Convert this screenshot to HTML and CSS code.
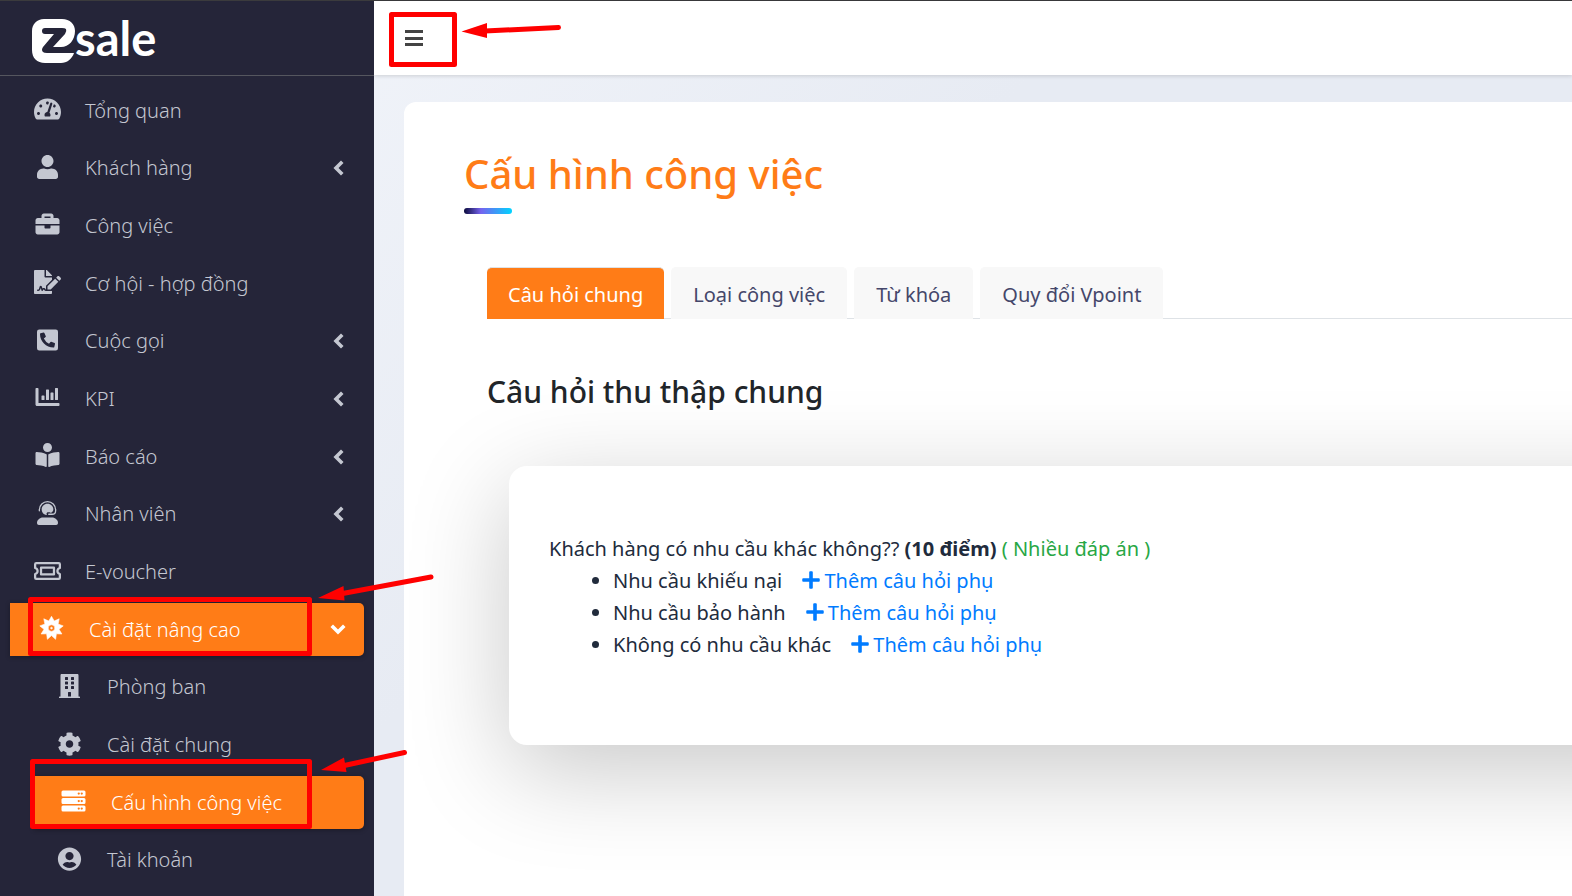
FILE: index.html
```html
<!DOCTYPE html>
<html lang="vi">
<head>
<meta charset="utf-8">
<meta name="viewport" content="width=device-width, initial-scale=1">
<title>zsale - Cấu hình công việc</title>
<link rel="stylesheet" href="styles.css">
</head>
<body>
<svg class="sprite" aria-hidden="true">
  <symbol id="chevron-left" viewBox="0 0 14 16"><path d="M10 3 5 8l5 5" fill="none" stroke="currentColor" stroke-width="3.6" stroke-linecap="square"/></symbol>
  <symbol id="plus" viewBox="0 0 448 512"><path d="M424 210H270V56c0-17-8-24-24-24h-44c-16 0-24 7-24 24v154H24c-17 0-24 8-24 24v44c0 16 7 24 24 24h154v154c0 17 8 24 24 24h44c16 0 24-7 24-24V302h154c17 0 24-8 24-24v-44c0-16-7-24-24-24z"/></symbol>
</svg>

<div class="app">
  <aside class="sidebar">
    <a class="brand" href="#" aria-label="zsale">
      <svg class="brand-mark" viewBox="0 0 44 44" aria-hidden="true">
        <path fill="#fff" d="M12 0H30C38 0 43 5 43 12C43 21 37 28 29 28H21L33 15Q35 12 34 10Q33 9 30 9H13Q10 9 10 12T13 15H22L11 28Q9 31 11 33Q12 34 15 34H42C40 40 35 44 29 44H13C5 44 0 39 0 31V12C0 5 5 0 12 0Z"/>
      </svg>
      <span class="brand-name">sale</span>
    </a>
    <nav class="nav" aria-label="Menu">
      <ul class="menu">
        <li><a class="item" href="#">
          <svg class="icon" viewBox="0 0 576 512"><path d="M288 32C128.94 32 0 160.94 0 320c0 52.8 14.25 102.26 39.06 144.8 5.61 9.62 16.3 15.2 27.44 15.2h443c11.14 0 21.83-5.58 27.44-15.2C561.75 422.26 576 372.8 576 320c0-159.06-128.94-288-288-288zm0 64c14.71 0 26.58 10.13 30.32 23.65-1.11 2.26-2.64 4.23-3.45 6.67l-9.22 27.67c-5.13 3.49-10.97 6.01-17.64 6.01-17.67 0-32-14.33-32-32S270.33 96 288 96zM96 384c-17.67 0-32-14.33-32-32s14.33-32 32-32 32 14.33 32 32-14.33 32-32 32zm48-160c-17.67 0-32-14.33-32-32s14.33-32 32-32 32 14.33 32 32-14.33 32-32 32zm246.77-72.41l-61.33 184C343.13 347.33 352 364.54 352 384c0 11.72-3.38 22.55-8.88 32H232.88c-5.5-9.45-8.88-20.28-8.88-32 0-33.94 26.5-61.43 59.9-63.59l61.34-184.01c4.17-12.56 17.73-19.45 30.36-15.17 12.57 4.19 19.35 17.79 15.17 30.36zm14.66 57.2l15.52-46.55c3.47-1.29 7.13-2.23 11.05-2.23 17.67 0 32 14.33 32 32s-14.33 32-32 32c-11.38-.01-20.89-6.28-26.57-15.22zM480 384c-17.67 0-32-14.33-32-32s14.33-32 32-32 32 14.33 32 32-14.33 32-32 32z"/></svg>
          <span class="label">Tổng quan</span></a></li>
        <li><a class="item" href="#">
          <svg class="icon" viewBox="0 0 448 512"><path d="M224 256c70.7 0 128-57.3 128-128S294.7 0 224 0 96 57.3 96 128s57.3 128 128 128zm89.6 32h-16.7c-22.2 10.2-46.9 16-72.9 16s-50.6-5.8-72.9-16h-16.7C60.2 288 0 348.2 0 422.4V464c0 26.5 21.5 48 48 48h352c26.5 0 48-21.5 48-48v-41.6c0-74.2-60.2-134.4-134.4-134.4z"/></svg>
          <span class="label">Khách hàng</span><svg class="chevron"><use href="#chevron-left"/></svg></a></li>
        <li><a class="item" href="#">
          <svg class="icon" viewBox="0 0 512 512"><path d="M320 336c0 8.84-7.16 16-16 16h-96c-8.84 0-16-7.16-16-16v-48H0v144c0 25.6 22.4 48 48 48h416c25.6 0 48-22.4 48-48V288H320v48zm144-208h-80V80c0-25.6-22.4-48-48-48H176c-25.6 0-48 22.4-48 48v48H48c-25.6 0-48 22.4-48 48v80h512v-80c0-25.6-22.4-48-48-48zm-144 0H192V96h128v32z"/></svg>
          <span class="label">Công việc</span></a></li>
        <li><a class="item" href="#">
          <svg class="icon" viewBox="0 0 576 512"><path d="M218.17 424.14c-2.95-5.92-8.09-6.52-10.17-6.52s-7.22.59-10.02 6.19l-7.67 15.34c-6.37 12.78-25.03 11.37-29.48-2.09L144 386.59l-10.61 31.88c-5.89 17.66-22.38 29.53-41 29.53H80c-8.84 0-16-7.16-16-16s7.16-16 16-16h12.39c4.83 0 9.11-3.08 10.64-7.66l18.19-54.64c3.3-9.81 12.44-16.41 22.78-16.41s19.48 6.59 22.77 16.41l13.88 41.64c19.75-16.19 54.06-9.7 66 14.16 1.89 3.78 5.49 5.95 9.36 6.26v-82.12l128-127.09V160H248c-13.2 0-24-10.8-24-24V0H24C10.7 0 0 10.7 0 24v464c0 13.3 10.7 24 24 24h336c13.3 0 24-10.7 24-24v-40l-128-.11c-16.12-.31-30.58-9.28-37.83-23.75zM384 121.9c0-6.3-2.5-12.4-7-16.9L279.1 7c-4.5-4.5-10.6-7-17-7H256v128h128v-6.1zm-96 225.06V416h68.99l161.68-162.78-67.88-67.88L288 346.96zm280.54-179.63l-31.87-31.87c-9.94-9.94-26.07-9.94-36.01 0l-27.25 27.25 67.88 67.88 27.25-27.25c9.95-9.94 9.95-26.07 0-36.01z"/></svg>
          <span class="label">Cơ hội - hợp đồng</span></a></li>
        <li><a class="item" href="#">
          <svg class="icon" viewBox="0 0 448 512"><path d="M400 32H48A48 48 0 0 0 0 80v352a48 48 0 0 0 48 48h352a48 48 0 0 0 48-48V80a48 48 0 0 0-48-48zm-16.39 307.37l-15 65A15 15 0 0 1 354 416C194 416 64 286.29 64 126a15.7 15.7 0 0 1 11.63-14.61l65-15A18.23 18.23 0 0 1 144 96a16.27 16.27 0 0 1 13.79 9.09l30 70A17.9 17.9 0 0 1 189 181a17 17 0 0 1-5.5 11.61l-37.89 31a231.91 231.91 0 0 0 110.78 110.78l31-37.89A17 17 0 0 1 299 291a17.85 17.85 0 0 1 5.91 1.21l70 30A16.25 16.25 0 0 1 384 336a17.41 17.41 0 0 1-.39 3.37z"/></svg>
          <span class="label">Cuộc gọi</span><svg class="chevron"><use href="#chevron-left"/></svg></a></li>
        <li><a class="item" href="#">
          <svg class="icon" viewBox="0 0 512 512"><path d="M332.8 320h38.4c6.4 0 12.8-6.4 12.8-12.8V172.8c0-6.4-6.4-12.8-12.8-12.8h-38.4c-6.4 0-12.8 6.4-12.8 12.8v134.4c0 6.4 6.4 12.8 12.8 12.8zm96 0h38.4c6.4 0 12.8-6.4 12.8-12.8V76.8c0-6.4-6.4-12.8-12.8-12.8h-38.4c-6.4 0-12.8 6.4-12.8 12.8v230.4c0 6.4 6.4 12.8 12.8 12.8zm-288 0h38.4c6.4 0 12.8-6.4 12.8-12.8v-70.4c0-6.4-6.4-12.8-12.8-12.8h-38.4c-6.4 0-12.8 6.4-12.8 12.8v70.4c0 6.4 6.4 12.8 12.8 12.8zm96 0h38.4c6.4 0 12.8-6.4 12.8-12.8V108.8c0-6.4-6.4-12.8-12.8-12.8h-38.4c-6.4 0-12.8 6.4-12.8 12.8v198.4c0 6.4 6.4 12.8 12.8 12.8zM496 384H64V80c0-8.84-7.16-16-16-16H16C7.16 64 0 71.16 0 80v336c0 17.67 14.33 32 32 32h464c8.84 0 16-7.16 16-16v-32c0-8.84-7.16-16-16-16z"/></svg>
          <span class="label">KPI</span><svg class="chevron"><use href="#chevron-left"/></svg></a></li>
        <li><a class="item" href="#">
          <svg class="icon" viewBox="0 0 512 512"><path d="M352 96c0-53.02-42.98-96-96-96s-96 42.98-96 96 42.98 96 96 96 96-42.98 96-96zM233.59 241.1c-59.33-36.32-155.43-46.3-203.79-49.05C13.55 191.13 0 203.51 0 219.14v222.8c0 14.33 11.59 26.28 26.49 27.05 43.66 2.29 131.99 10.68 193.04 41.43 9.37 4.72 20.48-1.71 20.48-11.87V252.56c-.01-4.67-2.32-8.95-6.42-11.46zm248.61-49.05c-48.35 2.74-144.46 12.73-203.78 49.05-4.1 2.51-6.41 6.96-6.41 11.63v245.79c0 10.19 11.14 16.63 20.54 11.9 61.04-30.72 149.32-39.11 192.97-41.4 14.9-.78 26.49-12.73 26.49-27.06V219.14c-.01-15.63-13.56-28.01-29.81-27.09z"/></svg>
          <span class="label">Báo cáo</span><svg class="chevron"><use href="#chevron-left"/></svg></a></li>
        <li><a class="item" href="#">
          <svg class="icon" viewBox="0 0 448 512"><path d="M320 352H128C57 352 0 409 0 464c0 30 18 48 40 48h368c22 0 40-18 40-48 0-55-57-112-128-112z"/><path d="M224 58c-72 0-124 54-124 122 0 44 22 84 56 104 14 9 30 14 46 15h12c-7-7-11-15-11-26 0-18 14-33 33-33h32c12 0 22 6 28 15 30-16 52-45 52-75 0-68-52-122-124-122z"/><path d="M50 208v-18C50 92 130 14 224 14s174 78 174 176v10c0 52-34 82-78 82h-70" fill="none" stroke="currentColor" stroke-width="28" stroke-linecap="round"/></svg>
          <span class="label">Nhân viên</span><svg class="chevron"><use href="#chevron-left"/></svg></a></li>
        <li><a class="item" href="#">
          <svg class="icon" viewBox="0 0 576 512"><path d="M48 88h480q24 0 24 24v80c-70 20-70 108 0 128v80q0 24-24 24H48q-24 0-24-24v-80c70-20 70-108 0-128v-80q0-24 24-24zM150 184h276v144H150z" fill="none" stroke="currentColor" stroke-width="48" stroke-linejoin="round"/></svg>
          <span class="label">E-voucher</span></a></li>
        <li><a class="item active" href="#" aria-expanded="true">
          <svg class="icon" viewBox="0 0 24 24"><path fill-rule="evenodd" stroke="currentColor" stroke-width=".6" stroke-linejoin="round" d="M12 .3 14.700 5 19.700 2.800 18.600 8.100 23.700 9.900 19.500 13.300 22.400 18 16.900 17.800 16.100 23.300 12 19.600 7.900 23.300 7.100 17.800 1.600 18 4.500 13.300.3 9.900 5.400 8.100 4.300 2.800 9.300 5zM12 8.800A3.300 3.300 0 1 0 12 15.400A3.300 3.300 0 1 0 12 8.800zM12 11.200a.9.9 0 1 1 0 1.800a.9.9 0 1 1 0-1.800z"/></svg>
          <span class="label">Cài đặt nâng cao</span><svg class="chevron chevron-open"><use href="#chevron-left"/></svg></a>
          <ul class="submenu">
            <li><a class="item" href="#">
              <svg class="icon" viewBox="0 0 448 512"><path d="M436 480h-20V24c0-13.255-10.745-24-24-24H56C42.745 0 32 10.745 32 24v456H12c-6.627 0-12 5.373-12 12v20h448v-20c0-6.627-5.373-12-12-12zM128 76c0-6.627 5.373-12 12-12h40c6.627 0 12 5.373 12 12v40c0 6.627-5.373 12-12 12h-40c-6.627 0-12-5.373-12-12V76zm0 96c0-6.627 5.373-12 12-12h40c6.627 0 12 5.373 12 12v40c0 6.627-5.373 12-12 12h-40c-6.627 0-12-5.373-12-12v-40zm52 148h-40c-6.627 0-12-5.373-12-12v-40c0-6.627 5.373-12 12-12h40c6.627 0 12 5.373 12 12v40c0 6.627-5.373 12-12 12zm76 160h-64v-84c0-6.627 5.373-12 12-12h40c6.627 0 12 5.373 12 12v84zm64-172c0 6.627-5.373 12-12 12h-40c-6.627 0-12-5.373-12-12v-40c0-6.627 5.373-12 12-12h40c6.627 0 12 5.373 12 12v40zm0-96c0 6.627-5.373 12-12 12h-40c-6.627 0-12-5.373-12-12v-40c0-6.627 5.373-12 12-12h40c6.627 0 12 5.373 12 12v40zm0-96c0 6.627-5.373 12-12 12h-40c-6.627 0-12-5.373-12-12V76c0-6.627 5.373-12 12-12h40c6.627 0 12 5.373 12 12v40z"/></svg>
              <span class="label">Phòng ban</span></a></li>
            <li><a class="item" href="#">
              <svg class="icon" viewBox="0 0 512 512"><path d="M487.4 315.7l-42.6-24.6c4.3-23.2 4.3-47 0-70.2l42.6-24.6c4.9-2.8 7.1-8.6 5.5-14-11.1-35.6-30-67.8-54.7-94.6-3.8-4.1-10-5.1-14.8-2.3L380.8 110c-17.9-15.4-38.5-27.3-60.8-35.1V25.8c0-5.6-3.9-10.5-9.4-11.7-36.7-8.2-74.3-7.8-109.2 0-5.5 1.2-9.4 6.1-9.4 11.7V75c-22.2 7.9-42.8 19.8-60.8 35.1L88.7 85.5c-4.9-2.8-11-1.9-14.8 2.3-24.7 26.7-43.6 58.9-54.7 94.6-1.7 5.4.6 11.2 5.5 14L67.3 221c-4.3 23.2-4.3 47 0 70.2l-42.6 24.6c-4.9 2.8-7.1 8.6-5.5 14 11.1 35.6 30 67.8 54.7 94.6 3.8 4.1 10 5.1 14.8 2.3l42.6-24.6c17.9 15.4 38.5 27.3 60.8 35.1v49.2c0 5.6 3.9 10.5 9.4 11.7 36.7 8.2 74.3 7.8 109.2 0 5.5-1.2 9.4-6.1 9.4-11.7v-49.2c22.2-7.9 42.8-19.8 60.8-35.1l42.6 24.6c4.9 2.8 11 1.9 14.8-2.3 24.7-26.7 43.6-58.9 54.7-94.6 1.5-5.5-.7-11.3-5.6-14.1zM256 336c-44.1 0-80-35.9-80-80s35.9-80 80-80 80 35.9 80 80-35.9 80-80 80z"/></svg>
              <span class="label">Cài đặt chung</span></a></li>
            <li><a class="item active" href="#" aria-current="page">
              <svg class="icon" viewBox="0 0 512 512"><path fill-rule="evenodd" d="M32 32H480a32 32 0 0 1 32 32V128a32 32 0 0 1-32 32H32A32 32 0 0 1 0 128V64A32 32 0 0 1 32 32zM368 72a24 24 0 1 0 0 48a24 24 0 1 0 0-48zM432 72a24 24 0 1 0 0 48a24 24 0 1 0 0-48zM32 192H480a32 32 0 0 1 32 32V288a32 32 0 0 1-32 32H32A32 32 0 0 1 0 288V224A32 32 0 0 1 32 192zM368 232a24 24 0 1 0 0 48a24 24 0 1 0 0-48zM432 232a24 24 0 1 0 0 48a24 24 0 1 0 0-48zM32 352H480a32 32 0 0 1 32 32V448a32 32 0 0 1-32 32H32A32 32 0 0 1 0 448V384A32 32 0 0 1 32 352zM368 392a24 24 0 1 0 0 48a24 24 0 1 0 0-48zM432 392a24 24 0 1 0 0 48a24 24 0 1 0 0-48z"/></svg>
              <span class="label">Cấu hình công việc</span></a></li>
            <li><a class="item" href="#">
              <svg class="icon" viewBox="0 0 496 512"><path d="M248 8C111 8 0 119 0 256s111 248 248 248 248-111 248-248S385 8 248 8zm0 96c48.6 0 88 39.4 88 88s-39.4 88-88 88-88-39.4-88-88 39.4-88 88-88zm0 344c-58.7 0-111.3-26.6-146.5-68.2 18.8-35.4 55.6-59.8 98.5-59.8 2.4 0 4.8.4 7.1 1.1 13 4.2 26.6 6.9 40.9 6.9 14.3 0 28-2.7 40.9-6.9 2.3-.7 4.7-1.1 7.1-1.1 42.9 0 79.7 24.4 98.5 59.8C359.3 421.4 306.7 448 248 448z"/></svg>
              <span class="label">Tài khoản</span></a></li>
          </ul>
        </li>
      </ul>
    </nav>
  </aside>

  <div class="main">
    <header class="topbar">
      <button class="toggle" type="button" aria-label="Thu gọn menu">
        <svg class="bars" viewBox="0 0 18 17" aria-hidden="true"><path d="M0 0h18v3H0zM0 7h18v3H0zM0 13h18v3H0z"/></svg>
      </button>
    </header>
    <main class="page">
      <h1 class="title">Cấu hình công việc</h1>
      <div class="body">
        <div class="tabs" role="tablist">
          <button class="tab selected" type="button" role="tab" aria-selected="true">Câu hỏi chung</button>
          <button class="tab" type="button" role="tab">Loại công việc</button>
          <button class="tab" type="button" role="tab">Từ khóa</button>
          <button class="tab" type="button" role="tab">Quy đổi Vpoint</button>
        </div>
        <h2 class="subtitle">Câu hỏi thu thập chung</h2>
        <section class="question">
          <p class="ask">Khách hàng có nhu cầu khác không?? <b>(10 điểm)</b> <span class="kind">( Nhiều đáp án )</span></p>
          <ul class="answers">
            <li>Nhu cầu khiếu nại <a class="add" href="#"><svg class="plus"><use href="#plus"/></svg>Thêm câu hỏi phụ</a></li>
            <li>Nhu cầu bảo hành <a class="add" href="#"><svg class="plus"><use href="#plus"/></svg>Thêm câu hỏi phụ</a></li>
            <li>Không có nhu cầu khác <a class="add" href="#"><svg class="plus"><use href="#plus"/></svg>Thêm câu hỏi phụ</a></li>
          </ul>
        </section>
      </div>
    </main>
  </div>
</div>

<svg class="annotations" width="600" height="860" viewBox="0 0 600 860" aria-hidden="true">
  <g fill="none" stroke="#f00" stroke-width="5" stroke-linejoin="round" stroke-linecap="round">
    <path d="M391.500 14.500h63v50h-63zM30.500 599.500h279v54h-279zM32.500 761.500h277v65h-277z"/>
    <path d="M485 31 558.500 27.500M340 594 431 577M342 766 404.500 752.500"/>
  </g>
  <path fill="#f00" d="M461.500 31.500 487 23v15zM318 598l25.500-12 1 14.500zM321 770l23-12.500 2.500 14.500z"/>
</svg>
</body>
</html>
```
FILE: styles.css
```css
* { box-sizing: border-box; }

body {
  margin: 0;
  font-family: "Noto Sans", "Open Sans", sans-serif;
  font-size: 20px;
  line-height: 32px;
  color: #212b3c;
  background: linear-gradient(135deg, #f0f3f9 15%, #e7ebf3 45%);
  overflow: hidden;
}

ul { list-style: none; margin: 0; padding: 0; }
a { text-decoration: none; }
svg { fill: currentColor; }

.sprite { display: none; }

.app {
  display: flex;
  min-height: 100vh;
  border-top: 1px solid #3b3b3d;
}

/* Sidebar */
.sidebar {
  position: relative;
  z-index: 1;
  display: flex;
  flex-direction: column;
  flex: 0 0 374px;
  background: #252539;
  color: #c4c7d1;
}

.brand {
  display: flex;
  align-items: center;
  height: 75px;
  padding: 6px 32px 0;
  border-bottom: 1px solid #55565f;
  color: #fff;
}
.brand-mark { width: 44px; height: 44px; }
.brand-name {
  font-family: Lato, sans-serif;
  font-size: 47px;
  font-weight: 700;
  line-height: 48px;
  margin: -6px 0 0 -1px;
}

.nav { display: flex; flex: 1; padding: 8px 10px 9px; }
.menu {
  display: flex;
  flex-direction: column;
  justify-content: space-between;
  gap: 4px;
  flex: 1;
}
.menu > li:last-child, .submenu { display: contents; }
.submenu .item { margin-left: 24px; padding-left: 22px; }

.item {
  display: flex;
  align-items: center;
  gap: 24px;
  height: 53px;
  padding: 0 19px 0 24px;
  font-weight: 300;
  color: inherit;
}
.item.active {
  padding-left: 28px;
  border-radius: 0 5px 5px 0;
  background: #ff7c17;
  color: #fff;
  box-shadow: 0 1px 5px rgba(0, 0, 0, .3);
}
.submenu .item.active { padding-left: 26px; }
.icon { width: 27px; height: 24px; margin-bottom: 3px; }
.label { flex: 1; }
.chevron { width: 14px; height: 16px; }
.chevron-open { transform: rotate(-90deg); }

/* Content */
.main { flex: 1; min-width: 0; display: flex; flex-direction: column; }

.topbar {
  display: flex;
  align-items: center;
  height: 74px;
  padding: 0 15px;
  background: #fff;
  box-shadow: 0 1px 4px rgba(0, 0, 0, .15);
}
.toggle {
  padding: 16px;
  border: 0;
  background: none;
  color: #444;
  line-height: 0;
}
.bars { width: 18px; height: 17px; }

.page {
  flex: 1;
  margin: 27px 0 0 30px;
  padding: 48px 0 0 60px;
  border-radius: 12px 0 0 0;
  background: #fff;
}

.title {
  margin: 0;
  font-size: 40px;
  font-weight: 500;
  line-height: 48px;
  color: #ff7c17;
}
.title::after {
  content: "";
  display: block;
  width: 48px;
  height: 6px;
  margin-top: 10px;
  border-radius: 3px;
  background: linear-gradient(90deg, #0a0a3c, #7563ee 35%, #00d4ff);
}

.body { padding: 53px 0 0 23px; }

.tabs {
  display: flex;
  gap: 7px;
  box-shadow: inset 0 -1px #dee2e6;
}
.tab {
  padding: 12px 22px 9px;
  border: 0;
  border-top: 1px solid #f8f8f8;
  border-radius: 5px 5px 0 0;
  background: #f8f8f8;
  font: inherit;
  line-height: 30px;
  color: #45476a;
}
.tab.selected {
  padding-left: 21px;
  padding-right: 21px;
  border-color: #dee2e6;
  background: #ff7c17;
  color: #fff;
}

.subtitle {
  margin: 54px 0 56px;
  font-size: 30px;
  font-weight: 500;
  line-height: 37px;
  color: #212529;
}

/* The card runs on past the right edge of the window */
.question {
  margin: 0 -120px 0 22px;
  padding: 67px 160px 84px 40px;
  border-radius: 18px;
  background: #fff;
  box-shadow: 0 25px 100px rgba(0, 0, 0, .22);
}
.ask { margin: 0; }
.kind { color: #28a745; }
.answers { padding-left: 64px; list-style: disc; }
.add { margin-left: 14px; color: #007bff; }
.plus { width: 20px; height: 20px; margin-right: 3px; vertical-align: -2px; }

/* Markup drawn over the page */
.annotations {
  position: absolute;
  top: 0;
  left: 0;
  pointer-events: none;
  z-index: 2;
}
```
